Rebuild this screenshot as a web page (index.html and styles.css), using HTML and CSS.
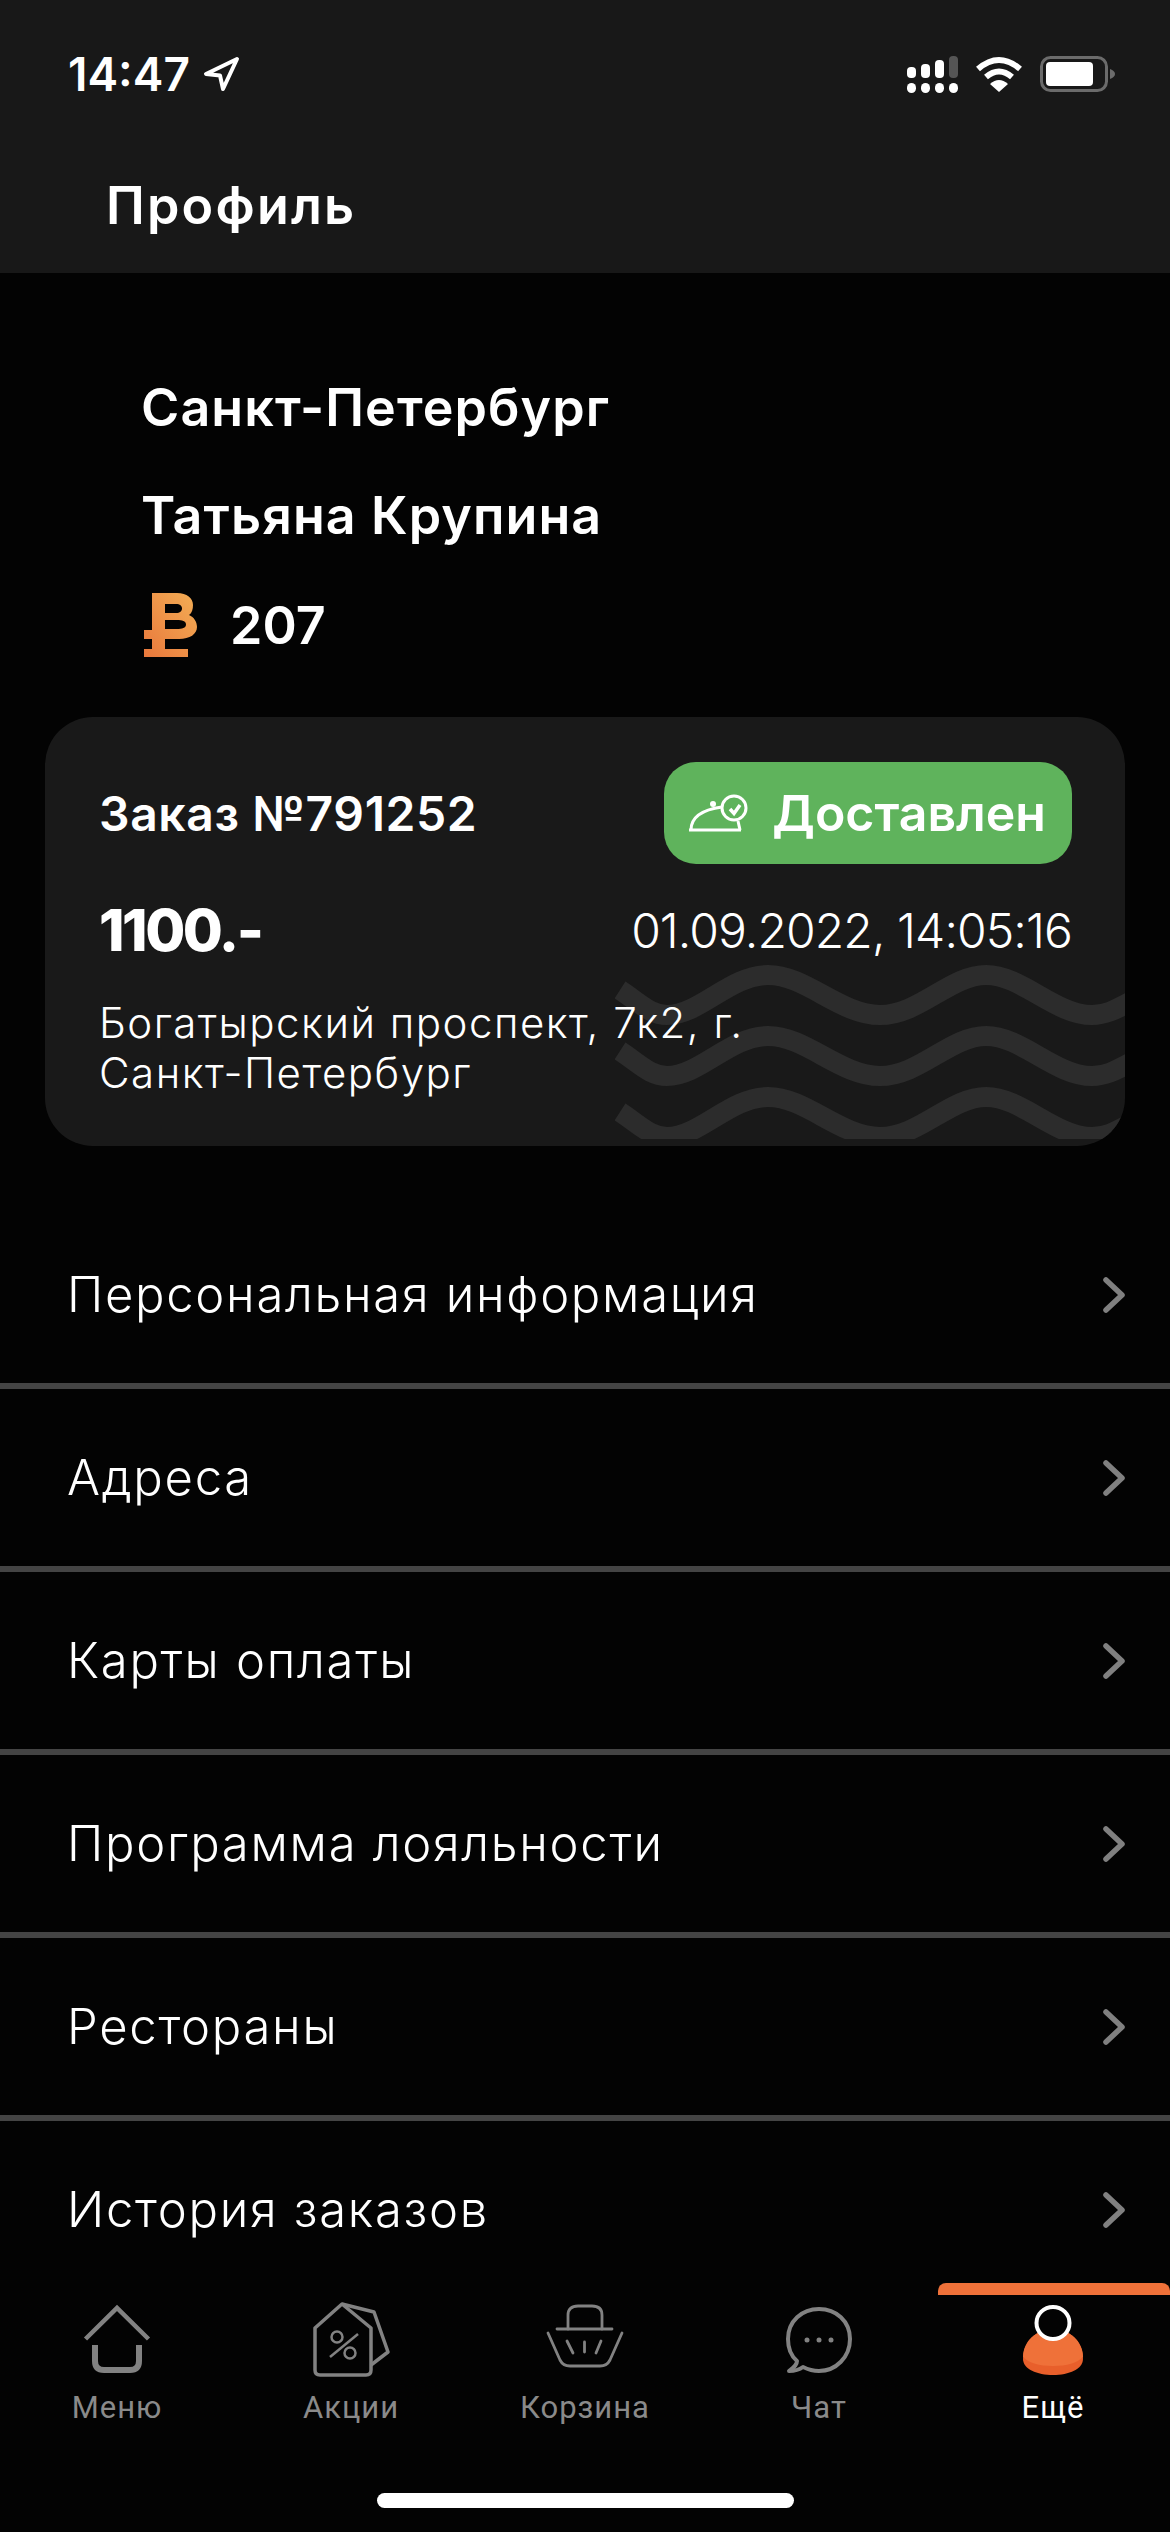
FILE: index.html
```html
<!DOCTYPE html>
<html lang="ru">
<head>
<meta charset="utf-8">
<title>Профиль</title>
<link rel="stylesheet" href="styles.css">
</head>
<body>
<div class="screen">
  <header class="top">
    <div class="status">
      <div class="clock">
        <span class="time">14:47</span>
        <svg class="loc" viewBox="0 0 37 36" width="37" height="36"><path d="M34 3 L3 18 L17 19.500 L20 33 Z" fill="none" stroke="#fff" stroke-width="4" stroke-linejoin="round"/></svg>
      </div>
      <div class="indicators">
        <svg width="51" height="37" viewBox="0 0 51 37">
          <g fill="#fff">
            <rect x="0" y="11" width="9" height="11" rx="4"/><rect x="14" y="8" width="9" height="14" rx="4"/><rect x="28" y="4" width="9" height="18" rx="4"/>
            <rect x="0" y="27" width="9" height="10" rx="4.500"/><rect x="14" y="27" width="9" height="10" rx="4.500"/><rect x="28" y="27" width="9" height="10" rx="4.500"/><rect x="42" y="27" width="9" height="10" rx="4.500"/>
          </g>
          <rect x="42" y="0" width="9" height="22" rx="4" fill="#555"/>
        </svg>
        <svg width="48" height="36" viewBox="0 0 48 36">
          <path d="M3 13 Q24 -5 45 13" fill="none" stroke="#fff" stroke-width="6"/>
          <path d="M11 21 Q24 10 37 21" fill="none" stroke="#fff" stroke-width="6"/>
          <path d="M15 28 Q24 20 33 28 L24 36 Z" fill="#fff"/>
        </svg>
        <svg width="75" height="36" viewBox="0 0 75 36">
          <rect x="1.500" y="1.500" width="65" height="33" rx="9" fill="none" stroke="#6b6b6b" stroke-width="3"/>
          <rect x="6" y="6" width="47" height="24" rx="4" fill="#fff"/>
          <path d="M70 13 Q75 15 75 18 Q75 21 70 23 Z" fill="#6b6b6b"/>
        </svg>
      </div>
    </div>
    <h1 class="title">Профиль</h1>
  </header>

  <section class="profile">
    <p class="line">Санкт-Петербург</p>
    <p class="line">Татьяна Крупина</p>
    <div class="points">
      <svg class="ruble" width="54" height="64" viewBox="0 0 54 64">
        <defs><linearGradient id="coin" x1="1" y1="0" x2="0" y2="1"><stop offset="0" stop-color="#f3ae55"/><stop offset="1" stop-color="#e9783c"/></linearGradient></defs>
        <path fill="url(#coin)" fill-rule="evenodd" d="M8 0 H33 C43 0 49 5 49 12 C49 16 48 20 45 22 C50 24 53 29 53 34 C53 41 46 46 35 46 H21 V56 H44 V64 H0 V56 H8 V46 H0 V37 H8 Z M21 11 V20 H32 C36 20 38 18 38 15.500 C38 13 36 11 32 11 Z M21 27 V36 H33 C38 36 42 35 42 31.500 C42 28 38 27 33 27 Z"/>
      </svg>
      <span class="points-value">207</span>
    </div>
  </section>

  <article class="order">
    <svg class="waves" viewBox="0 0 510 174" width="510" height="174">
      <g fill="none" stroke="#2c2c2c" stroke-width="20">
        <path d="M5 25 C25 38 35 50 52 50 C85 50 115 10 153 10 C191 10 225 50 265 50 C305 50 335 10 371 10 C407 10 440 50 477 50 C490 50 500 45 515 37"/>
        <path d="M5 86 C25 99 35 111 52 111 C85 111 115 71 153 71 C191 71 225 111 265 111 C305 111 335 71 371 71 C407 71 440 111 477 111 C490 111 500 106 515 98"/>
        <path d="M5 147 C25 160 35 172 52 172 C85 172 115 132 153 132 C191 132 225 172 265 172 C305 172 335 132 371 132 C407 132 440 172 477 172 C490 172 500 167 515 159"/>
      </g>
    </svg>
    <div class="order-head">
      <span class="order-no">Заказ №791252</span>
      <span class="badge">
        <svg width="60" height="38" viewBox="0 0 60 38" fill="none" stroke="#fff" stroke-width="3">
          <path d="M1 36 H53 M3 36 C3 25 12 16 34 13"/>
          <path d="M50 27 L52 36"/>
          <circle cx="25" cy="10" r="3" fill="#fff" stroke="none"/>
          <circle cx="46" cy="14" r="12"/>
          <path d="M42 15 L46 19.500 L52 11" stroke-width="3.500"/>
        </svg>
        <span>Доставлен</span>
      </span>
    </div>
    <div class="order-row">
      <span class="order-sum">1100.-</span>
      <span class="order-date">01.09.2022, 14:05:16</span>
    </div>
    <p class="order-addr">Богатырский проспект, 7к2, г.<br>Санкт-Петербург</p>
  </article>

  <nav class="menu">
    <a class="item">Персональная информация<svg class="chev" width="24" height="40" viewBox="0 0 24 40"><path d="M4 5 L20 20 L4 35" fill="none" stroke="#808080" stroke-width="5.500" stroke-linecap="round" stroke-linejoin="round"/></svg></a>
    <a class="item">Адреса<svg class="chev" width="24" height="40" viewBox="0 0 24 40"><path d="M4 5 L20 20 L4 35" fill="none" stroke="#808080" stroke-width="5.500" stroke-linecap="round" stroke-linejoin="round"/></svg></a>
    <a class="item">Карты оплаты<svg class="chev" width="24" height="40" viewBox="0 0 24 40"><path d="M4 5 L20 20 L4 35" fill="none" stroke="#808080" stroke-width="5.500" stroke-linecap="round" stroke-linejoin="round"/></svg></a>
    <a class="item">Программа лояльности<svg class="chev" width="24" height="40" viewBox="0 0 24 40"><path d="M4 5 L20 20 L4 35" fill="none" stroke="#808080" stroke-width="5.500" stroke-linecap="round" stroke-linejoin="round"/></svg></a>
    <a class="item">Рестораны<svg class="chev" width="24" height="40" viewBox="0 0 24 40"><path d="M4 5 L20 20 L4 35" fill="none" stroke="#808080" stroke-width="5.500" stroke-linecap="round" stroke-linejoin="round"/></svg></a>
    <a class="item">История заказов<svg class="chev" width="24" height="40" viewBox="0 0 24 40"><path d="M4 5 L20 20 L4 35" fill="none" stroke="#808080" stroke-width="5.500" stroke-linecap="round" stroke-linejoin="round"/></svg></a>
  </nav>

  <footer class="tabs">
    <div class="tab">
      <svg width="70" height="76" viewBox="0 0 70 76" fill="none" stroke="#828282" stroke-width="4.500">
        <path d="M3.500 38 L35 7 L66.500 38"/>
        <path d="M13 44 V60 Q13 69 22 69 H48 Q57 69 57 60 V44" stroke-width="6"/>
      </svg>
      <span>Меню</span>
    </div>
    <div class="tab">
      <svg width="78" height="76" viewBox="0 0 78 76" fill="none" stroke="#828282" stroke-width="3.500" stroke-linejoin="round">
        <path d="M30 3 L3 27 V69 Q3 74 8 74 H54 Q59 74 59 69 V27 Z"/>
        <path d="M30 3 L62 11 L76 51 L59 64"/>
        <circle cx="25" cy="36" r="5.500" stroke-width="2.500"/>
        <circle cx="38" cy="52" r="5.500" stroke-width="2.500"/>
        <path d="M18 56 L46 33" stroke-width="2.500"/>
      </svg>
      <span>Акции</span>
    </div>
    <div class="tab">
      <svg width="80" height="76" viewBox="0 0 80 76" fill="none" stroke="#828282" stroke-width="2.800" stroke-linecap="round">
        <path d="M12 28 H67"/>
        <path d="M23 28 V14 Q23 5 33 5 H47 Q57 5 57 14 V28"/>
        <path d="M3 32 L15 59 Q18 65 25 65 H55 Q62 65 65 59 L77 32"/>
        <path d="M22 40 L28 52 M39.500 41 V51 M56 40 L51 52"/>
      </svg>
      <span>Корзина</span>
    </div>
    <div class="tab">
      <svg width="70" height="76" viewBox="0 0 70 76" fill="none" stroke="#828282" stroke-width="4" stroke-linejoin="round">
        <path d="M13 60 C6 54 4 46 4 38 C4 20 18 8 35 8 C52 8 66 20 66 38 C66 56 52 70 35 70 C28 70 23 68 19 66 C15 69 10 70 5 70 C10 66 13 64 13 60 Z"/>
        <g fill="#828282" stroke="none"><circle cx="23" cy="39" r="2.500"/><circle cx="35" cy="39" r="2.500"/><circle cx="47" cy="39" r="2.500"/></g>
      </svg>
      <span>Чат</span>
    </div>
    <div class="tab tab-on">
      <svg width="60" height="76" viewBox="0 0 60 76">
        <path d="M0 58 C0 40 14 28 30 28 C46 28 60 40 60 58 C60 68 46 74 30 74 C14 74 0 68 0 58 Z" fill="#e85f2b"/>
        <path d="M0 56 C0 40 14 28 30 28 C46 28 60 40 60 56 C54 62 44 65 30 65 C16 65 6 62 0 56 Z" fill="#ef7139"/>
        <ellipse cx="30" cy="22" rx="16.500" ry="16" fill="#030303" stroke="#fff" stroke-width="4"/>
      </svg>
      <span>Ещё</span>
    </div>
  </footer>
  <div class="home-bar"></div>
</div>
</body>
</html>
```
FILE: styles.css
```css
* { box-sizing: border-box; }

html, body {
  margin: 0;
  padding: 0;
  background: #030303;
}

.screen {
  width: 1170px;
  height: 2532px;
  overflow: hidden;
  position: relative;
  color: #fff;
  font-family: "Inter", "Open Sans", sans-serif;
  background: #030303;
}

/* Header with the system status row */
.top {
  height: 273px;
  background: #181818;
  padding: 54px 55px 0 68px;
}

.status {
  display: flex;
  justify-content: space-between;
  align-items: center;
  height: 40px;
}

.clock {
  display: flex;
  align-items: center;
  gap: 13px;
}

.time {
  font-size: 46px;
  font-weight: 600;
  line-height: 40px;
}

.indicators {
  display: flex;
  align-items: center;
  gap: 17px;
}

.title {
  margin: 82px 0 0 38px;
  font-size: 52px;
  font-weight: 600;
  line-height: 60px;
  letter-spacing: 2.2px;
}

/* City, name, bonus balance */
.profile {
  padding: 115px 0 0 144px;
  height: 444px;
}

.line {
  margin: 0 0 68px -3px;
  font-size: 52px;
  font-weight: 600;
  line-height: 40px;
  letter-spacing: 1.1px;
}

.points {
  display: flex;
  align-items: center;
  gap: 32px;
  margin-top: -11px;
}

.points-value {
  font-size: 52px;
  font-weight: 600;
}

/* Last order card */
.order {
  position: relative;
  margin: 0 45px;
  height: 429px;
  border-radius: 48px;
  background: #191919;
  overflow: hidden;
  padding: 45px 53px 0 54px;
}

.waves {
  position: absolute;
  left: 570px;
  top: 248px;
  height: 174px;
  overflow: hidden;
}

.order-head,
.order-row {
  position: relative;
  display: flex;
  justify-content: space-between;
  align-items: center;
}

.order-no {
  font-size: 48px;
  font-weight: 600;
  letter-spacing: 0.6px;
}

.badge {
  display: flex;
  align-items: center;
  gap: 24px;
  height: 102px;
  padding: 0 26px 0 24px;
  border-radius: 32px;
  background: #5fb35c;
  font-size: 50px;
  font-weight: 600;
}

.order-row {
  margin-top: 31px;
  height: 70px;
}

.order-sum {
  font-size: 58px;
  font-weight: 800;
  letter-spacing: -2.5px;
}

.order-date {
  font-size: 48px;
  font-weight: 300;
  letter-spacing: -0.9px;
}

.order-addr {
  position: relative;
  margin: 33px 0 0;
  font-size: 42px;
  font-weight: 300;
  line-height: 50px;
  letter-spacing: 1.5px;
}

/* Account sections */
.menu {
  margin-top: 60px;
}

.item {
  display: flex;
  justify-content: space-between;
  align-items: center;
  height: 183px;
  padding: 0 44px 0 67px;
  border-bottom: 6px solid #444;
  font-size: 49px;
  font-weight: 300;
  letter-spacing: 1.7px;
}

.item:last-child {
  border-bottom: 0;
  padding-bottom: 6px;
}

/* Bottom tab bar */
.tabs {
  position: absolute;
  left: 0;
  top: 2283px;
  width: 1170px;
  height: 249px;
  display: grid;
  grid-template-columns: repeat(5, 234px);
  background: #030303;
}

.tab {
  display: flex;
  flex-direction: column;
  align-items: center;
  padding-top: 18px;
  font-family: "Roboto", sans-serif;
  font-size: 31px;
  line-height: 40px;
  letter-spacing: 1px;
  color: #8a8a8a;
}

.tab span {
  margin-top: 11px;
}

.tab-on {
  position: relative;
  color: #fff;
}

.tab-on::before {
  content: "";
  position: absolute;
  left: 2px;
  right: 0;
  top: 0;
  height: 12px;
  border-radius: 8px 8px 0 0;
  background: #ef7139;
}

.home-bar {
  position: absolute;
  left: 377px;
  top: 2493px;
  width: 417px;
  height: 15px;
  border-radius: 8px;
  background: #fff;
}
```
